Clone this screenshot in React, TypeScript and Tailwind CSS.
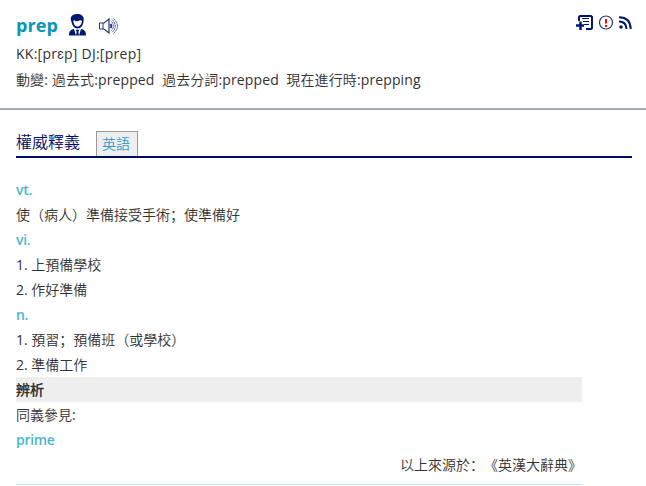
import React from "react";

function PersonIcon() {
  return (
    <svg width="19" height="24" viewBox="0 0 19 24" fill="#001970">
      <path fillRule="evenodd" d="M5 2C6.500 1 8 1.200 9.500 1c4-.1 6.500 2.400 6.200 6-.3 5-2.500 8.500-6.200 8.500C6.200 15.500 4.200 12.500 3.500 9 2 5.500 3 3 5 2zM5.300 8c.2 3.300 2 5.500 4.200 5.500s4.200-2.200 4.500-5.500c-.3-.5-1.200-.8-2-.8C9 9 7 8 6.500 7.200 6 7.300 5.500 7.500 5.300 8z" />
      <path d="M1 22.500c0-4 1.500-6 5-6.500l2 6.500zM18 22.500c0-4-1.500-6-5-6.500L11 22.500zM7.500 16.800h4l-1.200 2 .7 3.700H8l.7-3.700z" />
    </svg>
  );
}

function SpeakerIcon() {
  return (
    <svg width="20" height="18" viewBox="0 0 20 18" fill="none" stroke="#24357f" strokeWidth="1">
      <path d="M.5 6H4v6H.5z" />
      <path d="M4 6h1l5-4v14L5 12H4" strokeWidth="1.200" />
      <path d="M11.500 7q1.700 2 0 4" strokeWidth="1.800" />
      <path d="M12.500 4.500q4 4.500 0 9M13 2.500q6.500 6.500 0 13M14.500 1.500q8 7.500 0 15" strokeWidth=".8" strokeDasharray="2.500 .5" />
    </svg>
  );
}

function NoteIcon() {
  return (
    <svg width="18" height="17" viewBox="0 0 18 17" fill="none" stroke="#001970">
      <path d="M3 7V3l1-1h11l1 1v11l-1 1h-5" strokeWidth="2" />
      <path d="M6 4.500h7M7 7.500h6M8 10.500h5" strokeWidth="1" />
      <path d="M0 11.500h8M4.500 7.500V16" strokeWidth="2.500" />
    </svg>
  );
}

function AlertIcon() {
  return (
    <svg width="15" height="15" viewBox="0 0 15 15" fill="none">
      <circle cx="7" cy="7.500" r="6.500" stroke="#27386f" strokeWidth="1.200" />
      <path d="M7 4v4.500M7 10v2" stroke="#f00" strokeWidth="2" />
    </svg>
  );
}

function FeedIcon() {
  return (
    <svg width="13" height="13" viewBox="0 0 13 13" fill="none" stroke="#001970" strokeWidth="2">
      <path d="M0 1.300Q11.500 1.500 11.700 13M0 5.500Q7.200 5.500 7.500 13" />
      <circle cx="2" cy="11" r="1.800" fill="#001970" stroke="none" />
    </svg>
  );
}

function Row({ className = "", children }: { className?: string; children: React.ReactNode }) {
  return <div className={`h-[25px] leading-[25px] whitespace-pre ${className}`}>{children}</div>;
}

const tag = "font-semibold tracking-[-0.3px] text-[#4ab8c8]";

export default function App() {
  return (
    <div className="h-[486px] overflow-hidden bg-white font-['Open_Sans','Noto_Sans_CJK_SC_DemiLight','Noto_Sans_CJK_SC',sans-serif] text-sm text-[#333] [text-spacing-trim:space-all]">
      <header className="h-[110px] border-b-2 border-[#a5aabc] pl-4">
        <div className="flex h-10 items-start justify-between pr-[14px]">
          <div className="flex items-start">
            <h1 className="w-[52px] pt-3 text-lg leading-[27px] font-bold tracking-[0.1px] text-[#0796b7]">prep</h1>
            <div className="pt-[13px]"><PersonIcon /></div>
            <div className="pt-[17px] pl-3"><SpeakerIcon /></div>
          </div>
          <div className="flex items-start">
            <div className="pt-[14px]"><NoteIcon /></div>
            <div className="pt-[15px] pl-[5px]"><AlertIcon /></div>
            <div className="pt-4 pl-[5px]"><FeedIcon /></div>
          </div>
        </div>
        <div className="h-[27px] leading-7 tracking-[0.26px]">KK:[prɛp] DJ:[prep]</div>
        <div className="leading-[26px] tracking-[0.12px] whitespace-pre">動變: 過去式:prepped  過去分詞:prepped  現在進行時:prepping</div>
      </header>
      <section className="pl-4">
        <div className="mt-[21px] mr-[14px] flex h-[27px] border-b-2 border-[#000c64]">
          <h2 className="w-20 text-base leading-[22px] text-[#000c64]">權威釋義</h2>
          <div className="h-[25px] w-[42px] border border-b-0 border-[#999] bg-[#eee] pl-[5px] leading-6 text-[#3399cc]">英語</div>
        </div>
        <div className="mt-[19px] w-[566px] border-b border-[#bce8f8] pb-[7px]">
          <Row className={tag}>vt.</Row>
          <Row>使（病人）準備接受手術；使準備好</Row>
          <Row className={tag}>vi.</Row>
          <Row>1. 上預備學校</Row>
          <Row>2. 作好準備</Row>
          <Row className={tag}>n.</Row>
          <Row>1. 預習；預備班（或學校）</Row>
          <Row>2. 準備工作</Row>
          <Row className="bg-[#eee] font-bold">辨析</Row>
          <Row>同義參見:</Row>
          <Row className={tag}>prime</Row>
          <Row className="text-right">以上來源於：《英漢大辭典》</Row>
        </div>
      </section>
    </div>
  );
}
